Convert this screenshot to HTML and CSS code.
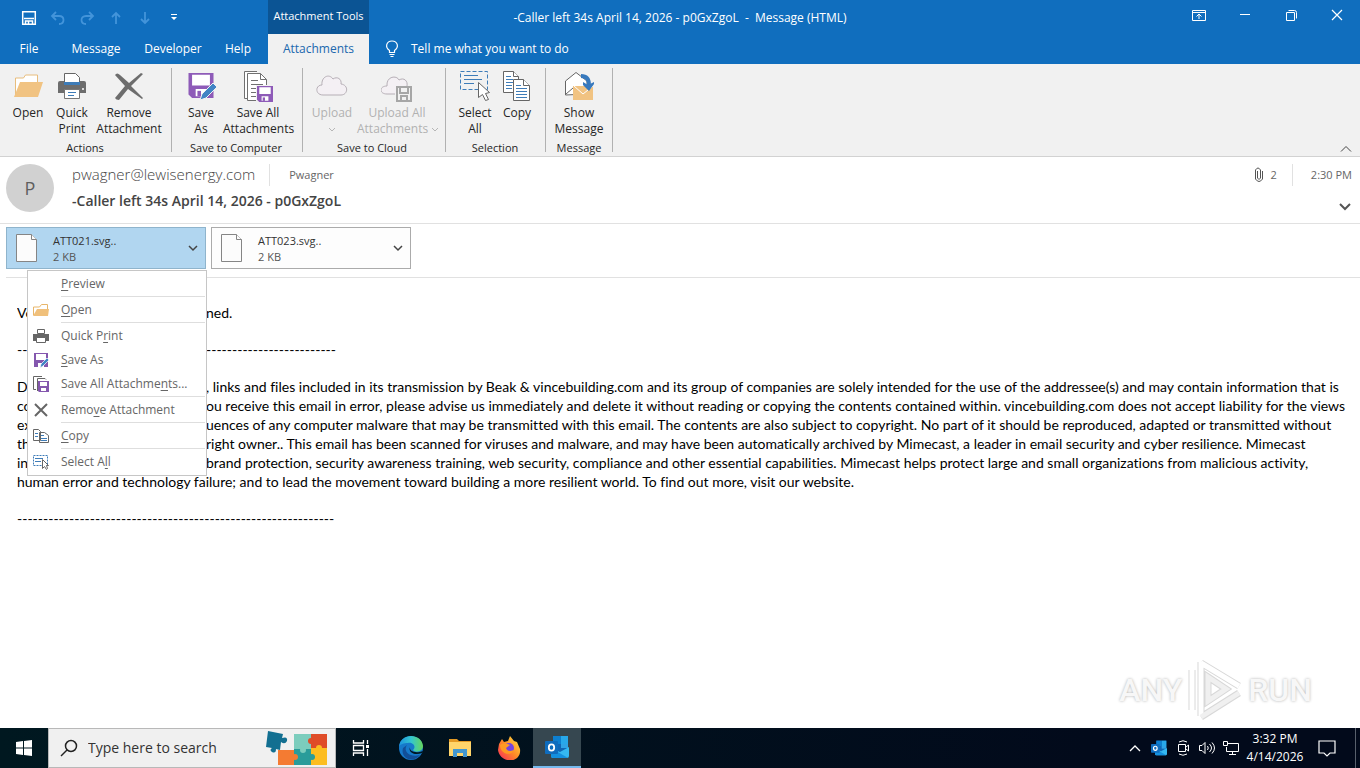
FILE: index.html
```html
<!DOCTYPE html>
<html lang="en">
<head>
<meta charset="utf-8">
<meta name="viewport" content="width=device-width, initial-scale=1">
<title>-Caller left 34s April 14, 2026 - p0GxZgoL - Message (HTML)</title>
<link rel="stylesheet" href="styles.css">
</head>
<body>
<svg class="defs" aria-hidden="true">
  <symbol id="floppy" viewBox="0 0 28 28"><path fill="#fff" d="M3 1h22v14H3zM8 18h12v9H8z"/><path fill="#8e5bb8" fill-rule="evenodd" d="M0 0h28v28H4l-4-4zM4 2v12h20V2zM8 18v8h12v-8z"/><path fill="#8e5bb8" d="M10 20h4v6h-4z"/></symbol>
  <symbol id="outlook" viewBox="0 0 24 24"><path fill="#1066b5" d="M8 1h15v16H8z"/><path fill="#28a8ea" d="M16 1h7v8h-7z"/><path fill="#0d7fd0" d="M8 1h8v8H8z"/><path fill="#2fa3e6" d="M16 9h7v4h-7z"/><path fill="#35b8f1" d="M6 13l9 4 9-5v9a2 2 0 0 1-2 2H8a2 2 0 0 1-2-2z"/><path fill="#1490df" d="M6 13l17 10H8a2 2 0 0 1-2-2z"/><rect y="6" width="13" height="13" rx="1" fill="#0f6cbd"/><ellipse cx="6.500" cy="12.500" rx="2.700" ry="3.100" fill="none" stroke="#fff" stroke-width="1.800"/></symbol>
</svg>
<header class="chrome">
  <div class="titlebar">
    <div class="title-left">
      <div class="quick">
        <button aria-label="Save"><svg width="16" height="16" viewBox="0 0 16 16" fill="none" stroke="#fff" stroke-width="1.500"><path d="M1.700 1.700h12.600v12.600H1.700zM3 8.500h10M4.500 14v-3h7v3M7.500 11v3"/></svg></button>
        <button aria-label="Undo"><svg width="16" height="16" viewBox="0 0 16 16" fill="none" stroke="#4394da" stroke-width="1.800"><path d="M6 2L2 6l4 4M2 6h7c6 0 6 8 0 8"/></svg></button>
        <button aria-label="Redo"><svg width="16" height="16" viewBox="0 0 16 16" fill="none" stroke="#4394da" stroke-width="1.800"><path d="M10 2l4 4-4 4M14 6H7c-6 0-6 8 0 8"/></svg></button>
        <button aria-label="Previous item"><svg width="16" height="16" viewBox="0 0 16 16" fill="none" stroke="#4394da" stroke-width="1.800"><path d="M8 14V3M4 7l4-4 4 4"/></svg></button>
        <button aria-label="Next item"><svg width="16" height="16" viewBox="0 0 16 16" fill="none" stroke="#4394da" stroke-width="1.800"><path d="M8 2v11M4 9l4 4 4-4"/></svg></button>
        <button aria-label="Customize toolbar"><svg width="16" height="16" viewBox="0 0 16 16"><path fill="#fff" d="M5 4h6v1H5zM5 7h6l-3 3z"/></svg></button>
      </div>
      <div class="context">Attachment Tools</div>
    </div>
    <h1 class="title">-Caller left 34s April 14, 2026 - p0GxZgoL&nbsp; -&nbsp; Message (HTML)</h1>
    <div class="controls">
      <button aria-label="Ribbon display options"><svg width="14" height="12" viewBox="0 0 14 12" fill="none" stroke="#fff"><path d="M.5 1.500h13v10H.5zM1 3.500h12M7 10V5M4.500 7.500L7 5l2.500 2.500"/></svg></button>
      <button aria-label="Minimize"><svg width="12" height="12" viewBox="0 0 12 12" stroke="#fff"><path d="M1 5.500h10"/></svg></button>
      <button aria-label="Restore"><svg width="11" height="11" viewBox="0 0 11 11" fill="none" stroke="#fff"><path d="M.5 2.500h8v8h-8zM2.500 .5h6q2 0 2 2v6"/></svg></button>
      <button aria-label="Close"><svg width="12" height="12" viewBox="0 0 12 12" stroke="#fff" stroke-width="1.200"><path d="M1 1l10 10M11 1L1 11"/></svg></button>
    </div>
  </div>
  <nav class="tabs">
    <button class="t-file">File</button><button class="t-message">Message</button><button class="t-dev">Developer</button><button class="t-help">Help</button><button class="t-att">Attachments</button>
    <button class="tell"><svg width="14" height="18" viewBox="0 0 14 18" fill="none" stroke="#fff" stroke-width="1.200"><path d="M4.500 12.500v-2C-.5 7 1.500 1 7 1s7.500 6 2.500 9.500v2zM4.500 14.500h5M5.500 16.500h3"/></svg>Tell me what you want to do</button>
  </nav>
</header>
<section class="ribbon" aria-label="Attachments ribbon">
  <div class="group g-actions">
    <div class="tools">
      <button class="w44"><svg viewBox="0 0 32 32"><path fill="#fff" stroke="#e8bd7d" d="M3.500 25V8h8l2-3h12v8"/><path fill="#f1c382" d="M2 27L8 12h23l-5 15z"/></svg>Open</button>
      <button class="w44"><svg viewBox="0 0 32 32"><path fill="#6d6d6d" d="M2 13q0-2 2-2h24q2 0 2 2v10H2z"/><path fill="#fff" stroke="#666" d="M8.500 3.500h11l4 4v6h-15z"/><path fill="#3e7cb8" d="M8 12h16v3H8z"/><path fill="#fff" stroke="#777" d="M8.500 19.500h15v9h-15z"/><path stroke="#3e7cb8" d="M12 22.500h8M12 25.500h6"/><circle cx="27" cy="19" r="1" fill="#fff"/></svg>Quick<br>Print</button>
      <button class="w70"><svg viewBox="0 0 32 32"><path fill="#6d6d6d" d="M2 5q2-3 5 0l9 8L28 3l2 1-12 12 12 12-1 1-14-10L6 30q-3 0-4-2l10-12z"/></svg>Remove<br>Attachment</button>
    </div>
    <h2>Actions</h2>
  </div>
  <div class="group g-computer">
    <div class="tools">
      <button class="w44"><svg viewBox="0 0 32 32"><use href="#floppy" x="3" y="3" width="26" height="25"/><path fill="#4184c4" stroke="#f1f1f1" d="M15 30l2-6 11-11 4 4-11 11z"/></svg>Save<br>As</button>
      <button class="w70"><svg viewBox="0 0 32 32"><g fill="#fff" stroke="#707070"><path d="M15 1.500H2.500v27H5"/><path d="M5.500 3.500h13l6 6v21h-19z"/><path d="M18.500 3.500v6h6M9 10.500h7M9 14.500h12M9 18.500h12M9 22.500h5M9 26.500h5" fill="none"/></g><path fill="#f1f1f1" d="M14 15h18v17H14z"/><use href="#floppy" x="15" y="16" width="16" height="16"/></svg>Save All<br>Attachments</button>
    </div>
    <h2>Save to Computer</h2>
  </div>
  <div class="group g-cloud">
    <div class="tools disabled">
      <button class="w50" disabled><svg viewBox="0 0 32 32"><path fill="#f4f0f4" stroke="#b6afb6" d="M7 25C-1 25-1 15 6 15c-1-8 7-12 11-6 4-3 9 0 8 5 8 1 7 11 0 11z"/></svg>Upload<br><svg class="mini" viewBox="0 0 8 5"><path fill="none" stroke="#b6b6b6" d="M1 1l3 3 3-3"/></svg></button>
      <button class="w80" disabled><svg viewBox="0 0 32 32"><path fill="#f4f0f4" stroke="#b6afb6" d="M14 24H6c-8 0-8-8 0-8-1-10 10-11 12-6 5-3 9 1 8 6"/><path fill="#f1f1f1" stroke="#a6a6a6" stroke-width="2" d="M16 17h14v14H16zM19 17v6h8v-6M20 31v-5h6v5"/></svg>Upload All<br>Attachments <svg class="mini" viewBox="0 0 8 5"><path fill="none" stroke="#b6b6b6" d="M1 1l3 3 3-3"/></svg></button>
    </div>
    <h2>Save to Cloud</h2>
  </div>
  <div class="group g-selection">
    <div class="tools">
      <button class="w44"><svg viewBox="0 0 32 32" fill="none"><path stroke="#3e7cb8" stroke-dasharray="4 2" d="M1.500 1.500h27v18h-27z"/><path stroke="#3e7cb8" d="M5 5.500h14M5 9.500h18M5 13.500h10"/><path fill="#fff" stroke="#666" d="M19.500 12.500v15l4-3 3 6 3-1-3-6 4-1z"/></svg>Select<br>All</button>
      <button class="w40"><svg viewBox="0 0 32 32" fill="#fff" stroke="#666"><path d="M2.500 1.500h10l5 5v16h-15z"/><path d="M12.500 1.500v5h5"/><path stroke="#3e7cb8" d="M5 6.500h5M5 9.500h7M5 12.500h7M5 15.500h6M5 18.500h6"/><path d="M12.500 9.500h10l6 6v15h-16z"/><path d="M22.500 9.500v6h6"/><path stroke="#3e7cb8" d="M15 15.500h5M15 18.500h11M15 21.500h11M15 24.500h11M15 27.500h11"/></svg>Copy</button>
    </div>
    <h2>Selection</h2>
  </div>
  <div class="group g-message">
    <div class="tools">
      <button class="w54"><svg viewBox="0 0 32 32"><path fill="#fff" stroke="#666" d="M2.500 25V11L13 2.500 24 11v13zM3 24l7-6"/><path fill="#f1c382" d="M10 16h20v14H10z"/><path fill="none" stroke="#fff" d="M11 16l9 8 10-8"/><path fill="none" stroke="#3879bd" stroke-width="4" d="M18 6c6 0 8 4 8 9"/><path fill="#3879bd" d="M20 12l5 3 6-3v2l-5 7-6-6z"/></svg>Show<br>Message</button>
    </div>
    <h2>Message</h2>
  </div>
  <button class="collapse" aria-label="Collapse ribbon"><svg width="12" height="8" viewBox="0 0 12 8" fill="none" stroke="#444"><path d="M1 6.500l5-5 5 5"/></svg></button>
</section>
<main>
  <section class="mailhead">
    <div class="avatar">P</div>
    <div class="who">
      <div class="sender"><span class="from">pwagner@lewisenergy.com</span><span class="to">Pwagner</span></div>
      <h2 class="subject">-Caller left 34s April 14, 2026 - p0GxZgoL</h2>
    </div>
    <div class="meta">
      <div class="when"><span class="clip"><svg width="10" height="16" viewBox="0 0 10 16" fill="none" stroke="#555"><path d="M3.500 4v7q1.500 3 3 0V3q-2.500-4-5 0v9q3.500 5 7 0V4"/></svg>2</span><time>2:30 PM</time></div>
      <button aria-label="Expand header"><svg width="12" height="8" viewBox="0 0 12 8" fill="none" stroke="#555" stroke-width="2"><path d="M1 1l5 5 5-5"/></svg></button>
    </div>
  </section>
  <section class="attachments">
    <div class="slot">
      <button class="chip selected"><svg width="22" height="30" viewBox="0 0 22 30" fill="#fcfcfc" stroke="#858585"><path d="M.5 1.500h15l5 5v22H.5z"/><path d="M15.500 1.500v5h5"/></svg><span class="file">ATT021.svg..<br><small>2 KB</small></span><svg width="10" height="7" viewBox="0 0 10 7" fill="none" stroke="#444" stroke-width="1.500"><path d="M1 1l4 4 4-4"/></svg></button>
      <div class="menu" role="menu">
        <button role="menuitem"><svg viewBox="0 0 16 16"></svg><span><u>P</u>review</span></button>
        <hr>
        <button role="menuitem"><svg viewBox="0 0 16 16"><path fill="#fff" stroke="#e8b66a" d="M.5 13V5h6l2-2.500h6V7"/><path fill="#f0c07b" d="M0 14l4-7h12l-1 7z"/></svg><span><u>O</u>pen</span></button>
        <hr>
        <button role="menuitem"><svg viewBox="0 0 16 16"><path fill="#666" d="M0 6h16v7H0z"/><path fill="#fff" stroke="#666" d="M4.500 1.500h7v4h-7zM3.500 9.500h9v5h-9z"/></svg><span>Quick P<u>r</u>int</span></button>
        <button role="menuitem"><svg viewBox="0 0 16 16"><path fill="#8457ae" fill-rule="evenodd" d="M1 1h14v14H1zM3 2v6h10V2zM5 11v4h6v-4z"/><path fill="#3e84c5" stroke="#fff" stroke-width=".7" d="M7 16l1-4 6-6 2 2-6 6z"/></svg><span><u>S</u>ave As</span></button>
        <button role="menuitem"><svg viewBox="0 0 16 16"><path fill="#fff" stroke="#666" d="M9 .5H.5v13H3M4.500 15V2.500H12l1 1"/><path fill="#8457ae" fill-rule="evenodd" d="M5 5h11v11H6l-1-1zM7 6v4h7V6zM8 12v3h5v-3z"/></svg><span>Save All Attachme<u>n</u>ts...</span></button>
        <hr>
        <button role="menuitem"><svg viewBox="0 0 16 16"><path stroke="#666" stroke-width="2" d="M2 2l12 12M14 2L2 14"/></svg><span>Remo<u>v</u>e Attachment</span></button>
        <hr>
        <button role="menuitem"><svg viewBox="0 0 16 16" fill="#fff" stroke="#666"><path d="M.5 1.500h5l2 2v9h-7zM6.500 4.500h5l4 3v7h-9z"/><path stroke="#3e7cb8" d="M2 5.500h3M2 8.500h3M8 7.500h3M8 10.500h6M8 12.500h6"/></svg><span><u>C</u>opy</span></button>
        <hr>
        <button role="menuitem"><svg viewBox="0 0 16 16" fill="none"><path stroke="#3e7cb8" stroke-dasharray="2 1" d="M.5 1.500h14v10H.5z"/><path stroke="#3e7cb8" d="M2 4.500h8M2 7.500h6"/><path fill="#fff" stroke="#666" d="M9.500 5.500v9l2-2 2 3 1-1-1-3h2z"/></svg><span>Select A<u>l</u>l</span></button>
      </div>
    </div>
    <div class="slot">
      <button class="chip"><svg width="22" height="30" viewBox="0 0 22 30" fill="#fcfcfc" stroke="#858585"><path d="M.5 1.500h15l5 5v22H.5z"/><path d="M15.500 1.500v5h5"/></svg><span class="file">ATT023.svg..<br><small>2 KB</small></span><svg width="10" height="7" viewBox="0 0 10 7" fill="none" stroke="#444" stroke-width="1.500"><path d="M1 1l4 4 4-4"/></svg></button>
    </div>
  </section>
  <article class="letter">
    <p><span class="line"><span class="lead">Vo</span>ned.</span></p>
    <p class="line"><span class="lead">---</span>-------------------------</p>
    <p>
      <span class="line"><span class="lead">D</span>, links and files included in its transmission by Beak &amp; vincebuilding.com and its group of companies are solely intended for the use of the addressee(s) and may contain information that is</span>
      <span class="line"><span class="lead">co</span>ou receive this email in error, please advise us immediately and delete it without reading or copying the contents contained within. vincebuilding.com does not accept liability for the views</span>
      <span class="line"><span class="lead">ex</span>uences of any computer malware that may be transmitted with this email. The contents are also subject to copyright. No part of it should be reproduced, adapted or transmitted without</span>
      <span class="line"><span class="lead">th</span>right owner.. This email has been scanned for viruses and malware, and may have been automatically archived by Mimecast, a leader in email security and cyber resilience. Mimecast</span>
      <span class="line"><span class="lead">in</span>brand protection, security awareness training, web security, compliance and other essential capabilities. Mimecast helps protect large and small organizations from malicious activity,</span>
      <span class="line">human error and technology failure; and to lead the movement toward building a more resilient world. To find out more, visit our website.</span>
    </p>
    <p>-------------------------------------------------------------</p>
  </article>
  <div class="watermark"><span>ANY</span><svg width="58" height="64" viewBox="0 0 58 64" fill="none"><path stroke="#d8d8d8" stroke-width="7" d="M6 12v40M15 4v54M15 5l38 23M15 59l38-24M22 19l18 12-18 12z"/><path stroke="#fff" stroke-width="5" d="M6 12v40M15 4v54M15 5l38 23"/><path stroke="#f0f0f0" stroke-width="5" d="M15 59l38-24M22 19l18 12-18 12z"/></svg><span>RUN</span></div>
</main>
<footer class="taskbar">
  <button class="start" aria-label="Start"><svg width="16" height="16" viewBox="0 0 16 16" fill="#fff"><path d="M0 2l7-1v6.500H0zM8 1l8-1v7.500H8zM0 8.500h7V15l-7-1zM8 8.500h8V16l-8-1z"/></svg></button>
  <label class="search"><svg width="18" height="18" viewBox="0 0 18 18" fill="none" stroke="#222" stroke-width="1.500"><circle cx="11" cy="7" r="5.500"/><path d="M7 11l-6 6"/></svg><input type="text" aria-label="Search" placeholder="Type here to search"><svg width="64" height="36" viewBox="0 0 64 36"><path fill="#f47b32" d="M13 20h17v15H13z"/><path fill="#7ccdbd" d="M29 4h17v16H29z"/><path fill="#df4c28" d="M46 4h16v15H46z"/><path fill="#2a9c9a" d="M29 19h17v16H29z"/><path fill="#fcbd20" d="M46 18h16v17H46z"/><circle cx="30" cy="27" r="3" fill="#f47b32"/><circle cx="38" cy="20" r="3" fill="#7ccdbd"/><circle cx="46" cy="11" r="3" fill="#df4c28"/><circle cx="47" cy="27" r="3" fill="#2a9c9a"/><circle cx="54" cy="18" r="3" fill="#fcbd20"/><path fill="#126f91" d="M3 1l15 3-1 4q6-2 5 3-2 4-6 1l-1 8-4-1q0 5-4 3-3-2 0-4l-6-1z"/></svg></label>
  <button class="app first" aria-label="Task view"><svg width="18" height="18" viewBox="0 0 18 18" fill="none" stroke="#fff" stroke-width="1.300"><path d="M1.500 1v3h10V1M1.500 6.500h10v5h-10zM1.500 17v-3h10v3M15.500 1v4M15.500 10v7"/><path fill="#fff" stroke="none" d="M14 6h3v3h-3z"/></svg></button>
  <button class="app" aria-label="Edge"><svg width="24" height="24" viewBox="0 0 24 24"><defs><linearGradient id="edge"><stop stop-color="#1c92df"/><stop offset=".5" stop-color="#33c6cf"/><stop offset="1" stop-color="#66d65b"/></linearGradient></defs><circle cx="12" cy="12" r="12" fill="#1679ca"/><path fill="url(#edge)" d="M0 11C1-4 23-3 24 10c0 6-8 7-10 4 4-4-1-8-5-7-4 0-8 1-9 4z"/><path fill="#124f98" d="M8 9c-4 5 1 13 13 10C14 28 1 22 4 12z"/><path fill="#001820" d="M11 11c-1 4 5 7 13 4l-1 2c-8 3-14-1-12-6z"/></svg></button>
  <button class="app" aria-label="File Explorer"><svg width="22" height="20" viewBox="0 0 22 20"><path fill="#e49a24" d="M0 1h8l2 2h12v5H0z"/><path fill="#ffd56b" d="M0 4h22v14H0z"/><path fill="#4297cf" d="M4 11h14v8h-4v-4H8v4H4z"/></svg></button>
  <button class="app" aria-label="Firefox"><svg width="24" height="24" viewBox="0 0 24 24"><defs><linearGradient id="fox" x1="1" y1="0" x2="0" y2="1"><stop stop-color="#ffe642"/><stop offset=".5" stop-color="#ff8c27"/><stop offset="1" stop-color="#f8235c"/></linearGradient></defs><path fill="url(#fox)" d="M2 8l3-5 2 3 4-1 2-5 4 5 3 1 3 7c2 15-20 15-22 1z"/><circle cx="12" cy="12" r="5" fill="#7544df"/><path fill="#ff9a23" d="M3 9c4-3 8-1 10 0l-4 3c1 4 6 3 8 2-3 7-14 4-14-5z"/></svg></button>
  <button class="app active" aria-label="Outlook"><svg width="24" height="24"><use href="#outlook" width="24" height="24"/></svg></button>
  <div class="tray">
    <button aria-label="Show hidden icons"><svg width="12" height="8" viewBox="0 0 12 8" fill="none" stroke="#fff" stroke-width="1.300"><path d="M1 7l5-5 5 5"/></svg></button>
    <button aria-label="Outlook"><svg width="16" height="16"><use href="#outlook" width="16" height="16"/></svg></button>
    <button aria-label="Camera"><svg width="14" height="16" viewBox="0 0 14 16" fill="none" stroke="#fff"><path d="M2.500 4.500h7v7h-7zM10 7l2.500-2v6L10 9M3 2q4-2.500 8 0M3 14q4 2.500 8 0"/></svg></button>
    <button aria-label="Volume"><svg width="18" height="16" viewBox="0 0 18 16" fill="none" stroke="#fff"><path d="M1.500 5.500H4l3-3v11l-3-3H1.500zM9.500 6q1.500 2 0 4M11.500 4q4 4 0 8M14 2.500q5 5.500 0 11"/></svg></button>
    <button aria-label="Network"><svg width="16" height="16" viewBox="0 0 16 16" fill="none" stroke="#fff"><path d="M5 3.500h10.500v8H3.500V7M.5 1.500h4v4h-4zM9.500 12v2.500M6 14.500h7"/></svg></button>
    <time class="clock">3:32 PM<br>4/14/2026</time>
    <button class="notify" aria-label="Notifications"><svg width="18" height="17" viewBox="0 0 18 17" fill="none" stroke="#fff" stroke-width="1.200"><path d="M1 1h16v12h-5l-3 3-3-3H1z"/></svg></button>
    <span class="desktop"></span>
  </div>
</footer>
</body>
</html>
```
FILE: styles.css
```css
* { box-sizing: border-box; }
body {
  margin: 0;
  min-height: 100vh;
  display: flex;
  flex-direction: column;
  background: #fff;
  color: #262626;
  font: 12px/16px "Open Sans", "Noto Sans", sans-serif;
}
button { border: 0; padding: 0; margin: 0; background: none; color: inherit; font: inherit; }
h1, h2, p { margin: 0; font: inherit; }
svg { flex: none; }
.defs { position: absolute; width: 0; height: 0; }

.chrome { background: #106ebe; color: #fff; }
.titlebar { display: grid; grid-template-columns: 369px 1fr 369px; height: 34px; }
.title-left { display: flex; }
.quick { width: 268px; display: flex; align-items: center; padding-left: 14px; }
.quick button { width: 29px; height: 32px; display: grid; place-items: center; }
.context { flex: 1; background: #0b5494; text-align: center; font-size: 11px; line-height: 32px; white-space: nowrap; }
.title { text-align: center; line-height: 36px; white-space: nowrap; }
.controls { display: flex; justify-content: flex-end; }
.controls button { width: 46px; height: 30px; display: grid; place-items: center; }
.tabs { display: flex; height: 30px; }
.t-file { width: 58px; }
.t-message { width: 76px; }
.t-dev { width: 78px; }
.t-help { width: 52px; }
.tabs .t-att { width: 101px; margin-left: 4px; background: #f1f1f1; color: #2068ae; }
.tell { display: flex; align-items: center; gap: 12px; margin-left: 16px; }

.ribbon { display: flex; background: #f1f1f1; border-bottom: 1px solid #d2d2d2; height: 93px; padding-top: 4px; }
.group { display: flex; flex-direction: column; justify-content: space-between; border-right: 1px solid #b1b1b1; height: 84px; padding-top: 2px; }
.group h2 { text-align: center; font-size: 11px; line-height: 16px; height: 12px; }
.g-actions { padding-left: 6px; padding-right: 7px; }
.g-computer { padding-left: 7px; padding-right: 9px; }
.g-cloud { padding-left: 4px; padding-right: 8px; }
.g-selection { padding-left: 7px; padding-right: 8px; }
.g-message { padding-left: 6px; padding-right: 6px; }
.tools { display: flex; align-items: flex-start; }
.tools button { white-space: nowrap; display: block; text-align: center; }
.tools button > svg:first-child { display: block; width: 32px; height: 32px; margin: 0 auto 3px; }
.tools .mini { width: 8px; height: 5px; vertical-align: middle; }
.disabled { color: #b1b1b1; }
.w40 { width: 40px; }
.w44 { width: 44px; }
.w50 { width: 50px; }
.w54 { width: 54px; }
.w70 { width: 70px; }
.w80 { width: 80px; }
.collapse { margin-left: auto; align-self: flex-end; line-height: 0; padding: 0 8px 3px; }

main { flex: 1; display: flex; flex-direction: column; }
.mailhead { display: flex; padding: 7px 8px 0 6px; height: 67px; border-bottom: 1px solid #e1e1e1; color: #666; }
.avatar { width: 48px; height: 48px; border-radius: 50%; background: #d1d1d1; color: #5e5e5e; text-align: center; font-size: 18px; line-height: 48px; }
.who { margin-left: 18px; }
.sender { display: flex; align-items: center; height: 22px; }
.from { font-size: 15px; line-height: 20px; padding-bottom: 2px; font-weight: 300; color: #444; }
.to { border-left: 1px solid #e1e1e1; margin-left: 14px; padding-left: 19px; font-size: 11px; line-height: 22px; }
.subject { font-size: 14px; font-weight: 600; color: #444; line-height: 20px; padding-top: 5px; }
.meta { margin-left: auto; display: flex; flex-direction: column; align-items: flex-end; gap: 13px; font-size: 11px; }
.when { display: flex; line-height: 22px; }
.clip { display: flex; align-items: center; gap: 7px; padding-right: 15px; border-right: 1px solid #e1e1e1; }
.when time { padding-left: 18px; }
.meta button { padding-right: 1px; line-height: 16px; }
.attachments { display: flex; gap: 5px; margin-left: 6px; padding: 3px 0 8px; border-bottom: 1px solid #e1e1e1; }
.slot { position: relative; }
.chip { width: 200px; height: 42px; border: 1px solid #ababab; background: #fdfdfd; color: #333; display: flex; align-items: center; padding: 0 7px 0 9px; text-align: left; }
.chip.selected { background: #b1d6f0; border-color: #8fb4cc; }
.file { flex: 1; margin-left: 15px; padding-top: 2px; font-size: 11px; }
.file small { font-size: 11px; color: #555; }
.menu { position: absolute; left: 21px; top: 43px; width: 180px; padding: 1px 0; background: #fff; border: 1px solid #c6c6c6; color: #666; z-index: 2; }
.menu button { display: flex; align-items: center; width: 100%; height: 24px; gap: 12px; padding-left: 5px; white-space: nowrap; }
.menu svg { width: 16px; height: 16px; }
.menu hr { height: 1px; border: 0; background: #dedede; margin: 0 1px 1px 33px; }
.menu u { text-underline-offset: 2px; }

.letter { padding: 25px 17px 0; font: 14px/19px Lato, "Open Sans", sans-serif; font-variant-ligatures: none; color: #000; }
.letter p { margin-bottom: 18px; white-space: nowrap; }
.line { display: flex; }
.lead { width: 189px; flex: none; overflow: hidden; }
.watermark { margin: auto 48px 6px auto; display: flex; align-items: center; gap: 4px; font: 500 32px/52px Roboto, "Open Sans", sans-serif; color: #f7f7f7; text-shadow: 0 0 3px #b0b0b0; }

.taskbar { display: flex; height: 40px; background: linear-gradient(90deg, #001820, #020a1b 80%); color: #fff; }
.taskbar button { display: grid; place-items: center; }
.taskbar .start { width: 48px; }
.search { width: 288px; background: #f0f0f0; border: 1px solid #b8b8b8; display: flex; align-items: center; padding: 0 6px 0 11px; }
.search input { flex: 1; min-width: 0; border: 0; outline: 0; background: none; padding: 0 0 0 10px; font: 14px/20px "Open Sans", sans-serif; }
.search input::placeholder { color: #333; opacity: 1; }
.taskbar .app { width: 49px; }
.taskbar .first { width: 50px; }
.taskbar .active { width: 48px; background: #364750; border-bottom: 2px solid #76b9ed; }
.tray { margin-left: auto; display: flex; }
.tray button { width: 24px; }
.clock { width: 64px; text-align: center; line-height: 18px; padding-top: 2px; }
.tray .notify { width: 40px; }
.desktop { border-left: 1px solid #58606c; margin-left: 8px; width: 5px; }
```
